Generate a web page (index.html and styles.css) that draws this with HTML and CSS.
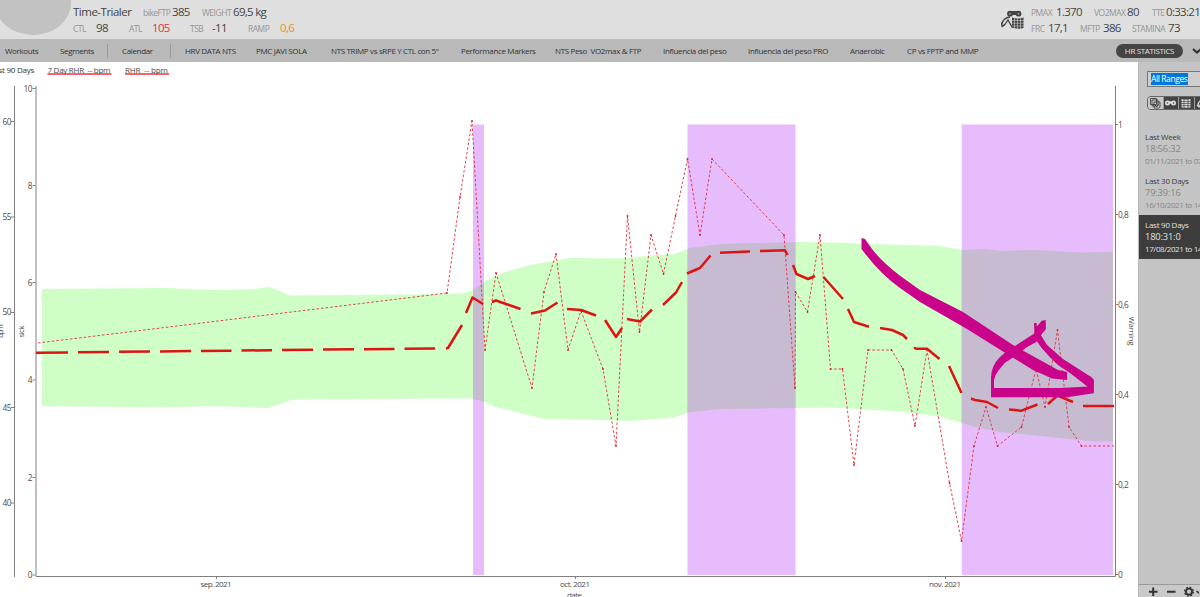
FILE: index.html
```html
<!DOCTYPE html>
<html lang="es">
<head>
<meta charset="utf-8">
<title>Time-Trialer</title>
<link rel="stylesheet" href="styles.css">
</head>
<body>
<div class="app">
  <header class="header">
    <div class="avatar"></div>
    <div class="athlete">
      <div class="row row-name"><b class="name">Time-Trialer</b><i>bikeFTP</i><b>385</b><i>WEIGHT</i><b>69,5 kg</b></div>
      <div class="row row-load"><i>CTL</i><b>98</b><i>ATL</i><b class="red">105</b><i>TSB</i><b>-11</b><i>RAMP</i><b class="orange">0,6</b></div>
    </div>
    <svg class="model-icon" width="24" height="20" viewBox="1001 10 24 20">
      <g fill="#444"><circle cx="1010" cy="13.7" r="2.9"/><circle cx="1018.5" cy="13.7" r="2.9"/><path d="M1010 11h8v4h-8z"/></g>
      <circle cx="1010" cy="13.7" r=".8" fill="#bbb"/><circle cx="1018.5" cy="13.7" r=".8" fill="#bbb"/>
      <path d="M1002 24Q1003 18 1010 17M1001.500 27L1004.500 25 1008 20 1012 27H1014M1001 22.500l1 3 3-1" fill="none" stroke="#444" stroke-width="1.300"/>
      <path d="M1012 17.500Q1018 19.500 1023.500 17.500V28Q1018 29.500 1012 27.500z" fill="#444"/>
      <path d="M1014.500 17v12M1017.500 17v12M1020.500 17v12M1012 20.500h12M1012 23.200h12M1012 26h12" stroke="#d0d0d0" stroke-width=".6"/>
    </svg>
    <div class="power">
      <div class="row row-p1"><i>PMAX</i><b>1.370</b><i>VO2MAX</i><b>80</b><i>TTE</i><b>0:33:21</b></div>
      <div class="row row-p2"><i>FRC</i><b>17,1</b><i>MFTP</i><b>386</b><i>STAMINA</i><b>73</b></div>
    </div>
  </header>
  <nav class="nav">
    <a>Workouts</a><a>Segments</a><span class="sep"></span><a>Calendar</a><span class="sep"></span><a>HRV DATA NTS</a><a>PMC JAVI SOLA</a><a>NTS TRIMP vs sRPE Y CTL con 5"</a><a>Performance Markers</a><a>NTS Peso&nbsp; VO2max &amp; FTP</a><a>Influencia del peso</a><a>Influencia del peso PRO</a><a>Anaerobic</a><a>CP vs FPTP and MMP</a>
    <span class="pill">HR STATISTICS</span>
    <svg class="chev" width="10" height="8" viewBox="0 0 10 8"><path d="M1 2l4 3.500 4-3.500" fill="none" stroke="#333" stroke-width="2.200"/></svg>
  </nav>
  <main class="main">
    <svg class="chart" width="1138" height="535" viewBox="0 62 1138 535">
      <defs>
        <path id="band" d="M42 289L165 288 210 290 250 289.500 270 287 290 295.500 450 294 462 293.500 472 290.500 485 281 505 272 530 265 570 258 625 258.500 655 255 675 254 690 248 720 244 795 242 835 242.500 870 244 940 246 962 250 985 249 1000 251 1035 250 1080 252.500 1113 252V441.500H1095L1060 438 1000 432 975 427 940 416.500 900 411.500 850 408.500 830 407.500 795 408 720 409 688 412.500 675 417.500 630 421 595 420 545 419 495 407 485 402 472 398.500 440 398.500 293 399.500 268 408 210 406 165 407.500 42 406z"/>
        <path id="warn" d="M473 124.500H484V575H473zM687.500 124.500H795.500V575H687.500zM961.700 124.500H1113V575H961.700z"/>
        <clipPath id="inBand"><use href="#band"/></clipPath>
      </defs>
      <g class="legend">
        <text class="period" x="34" y="73" text-anchor="end">Last 90 Days</text>
        <text x="47.500" y="73" textLength="63">7 Day RHR&#160; -- bpm</text>
        <text x="125" y="73" textLength="43">RHR&#160; -- bpm</text>
        <path d="M47.500 74H111.500M125 74H169" stroke="#ee3340" stroke-width="1.500"/>
      </g>
      <use href="#band" fill="#cfffc6"/>
      <use href="#warn" fill="#e6bcfc"/>
      <use href="#warn" fill="#c6bbd0" clip-path="url(#inBand)"/>
      <g class="axis">
        <path d="M14.500 86V577M36 86V576.500H1115.500V86"/>
        <path d="M11 121.500h3M11 217h3M11 312.500h3M11 407.500h3M11 503h3M32.500 88.500h3M32.500 185.500h3M32.500 282.500h3M32.500 380h3M32.500 477.500h3M32.500 575h3M1116 124.500h2M1116 214.500h2M1116 304.500h2M1116 394.500h2M1116 484.500h2M1116 574.500h2M216.500 577v2M575.500 577v2M945.500 577v2"/>
      </g>
      <g class="ticks end">
        <text x="11" y="124.500">60</text><text x="11" y="220">55</text><text x="11" y="315">50</text><text x="11" y="410.500">45</text><text x="11" y="506">40</text>
        <text x="32" y="91.500">10</text><text x="32" y="188.500">8</text><text x="32" y="285.500">6</text><text x="32" y="383">4</text><text x="32" y="480.500">2</text><text x="32" y="578">0</text>
      </g>
      <g class="ticks">
        <text x="1118" y="127.500">1</text><text x="1118" y="217.500">0,8</text><text x="1118" y="307.500">0,6</text><text x="1118" y="397.500">0,4</text><text x="1118" y="487.500">0,2</text><text x="1118" y="577.500">0</text>
      </g>
      <g class="ticks mid">
        <text x="216" y="587" textLength="31">sep. 2021</text><text x="575" y="587" textLength="30">oct. 2021</text><text x="945" y="587" textLength="32">nov. 2021</text><text x="574.500" y="597.500" textLength="15">date</text>
        <text transform="translate(3 331) rotate(-90)" textLength="14">bpm</text>
        <text transform="translate(23.500 331.500) rotate(-90)" textLength="12">sick</text>
        <text transform="translate(1129 331) rotate(90)" textLength="29">Warning</text>
      </g>
      <polyline class="rhr" points="38,343 447,293 460,197 472,121 485,350 496,273 532,388 544,292 556,254 568,350 581,311 603,369 616,446 627.500,216 639.500,332 651,235 663.500,274 675.500,216 687.500,159 700,235 712,159 784,235 795,388 795.500,292 807.500,312 820,235 830.500,369 842.500,369 854,465 868,350 891.500,350 903,369 915,426 927,350 949.500,483 961.500,541 974,446 986,407 997.500,446 1021.500,427 1036,369 1045,407 1057.500,330 1069,427 1081.500,446 1114,446"/>
      <path class="dots" d="M447 293h0M460 197h0M472 121h0M485 350h0M496 273h0M532 388h0M544 292h0M556 254h0M568 350h0M581 311h0M603 369h0M616 446h0M627.500 216h0M639.500 332h0M651 235h0M663.500 274h0M675.500 216h0M687.500 159h0M700 235h0M712 159h0M784 235h0M795 388h0M795.500 292h0M807.500 312h0M820 235h0M830.500 369h0M842.500 369h0M854 465h0M868 350h0M891.500 350h0M903 369h0M915 426h0M949.500 483h0M961.500 541h0M974 446h0M986 407h0M997.500 446h0M1021.500 427h0M1045 407h0M1057.500 330h0M1069 427h0M1081.500 446h0"/>
      <path class="week" d="M36 352.700L68 352.500M78 352.300L109 352M119 351.800L150 351.500M160 351.400L191 351M201 350.900L231.500 350.700M241.500 350.500L272 350.200M282 350L313 349.800M323 349.600L354 349.300M364 349.200L394.500 348.900M404.500 348.700L435 348.400M446 348.500L448 348 462 325M466 313L472.500 297.500 483 304M492 302L496 300.500 520.500 309M531 313.500L545 310.500 557.500 302.500M567 309L581 310 596 315.500M605 320L616 337 622 328M627 319L640 321.500 652 309.500M663 305L676 292.500 682 282M687 273.500L700 268 710.500 255.500M720 252.700L750 251.500M760 251L785 250.300 787.500 255M793 265L796.500 274 808 279 815 276M823.500 277L843 299M848 309L854 322 869 326.700M880 328L892 330 903 335 907 339M914 347.500L916 348.700H927L939.500 359M949 366L961.500 393M971 398.500L975 400 987 402 998 408M1009 409.500L1021.500 410.700 1037.500 404.500M1048 404L1057.500 395.500 1073 402M1083 406H1114"/>
      <g fill="#c9048a">
        <path d="M861.500 238L865 239 872 249Q882 262 900 275.700L920 290 963 312 1013 345 1040 360 1058 370 1067 372V380L1052 378.500 1033 370 1007 354 967 329 920 302 900 288Q880 274 861.500 249z"/>
        <path d="M1045.700 320L1041.700 320.700 1037.300 326 1035 333 1023 340.700 1010 349.300Q1004 353 1000 357 991 366 991 378V396.700L994 389V380Q995 375 998.300 370.700 1002 366 1005 362.700L1016.700 355 1026.700 347.300 1036.700 341.700 1041.700 334.300 1046 329z"/>
        <path d="M991 388H1060L1088 386.500 1093.700 379V393.300L1067 397.300H991z"/>
        <path d="M1034 323H1036.500L1037 327 1042 337 1047 345 1063 359 1088 375Q1093.700 378 1093.700 381V393L1088 387 1070 373 1058 365Q1050 358 1041.700 348L1034.500 338z"/>
      </g>
    </svg>
    <aside class="side">
      <div class="select"><span>All Ranges</span></div>
      <div class="tools">
        <span class="tool on"><svg width="12" height="12" viewBox="0 0 12 12"><path d="M1.500 1.500h6v6h-6zM3 3h6v6H3zM5 5h6v5L9.500 11H5z" fill="#ccc" stroke="#333" stroke-width=".8"/><path d="M6 8l1.500 1.500L10 6.500" fill="none" stroke="#333" stroke-width=".8"/></svg></span>
        <span class="tool"><svg width="13" height="12" viewBox="0 0 13 12"><circle cx="3.500" cy="6" r="2.500" fill="#ddd"/><circle cx="9.500" cy="6" r="2.500" fill="#ddd"/><path d="M3 5.500h7" stroke="#ddd" stroke-width="2.500"/><circle cx="3.500" cy="6" r=".8" fill="#444"/><circle cx="9.500" cy="6" r=".8" fill="#444"/></svg></span>
        <span class="tool"><svg width="12" height="12" viewBox="0 0 12 12"><path d="M1.500 2Q6 3 10.500 2V10.500Q6 11 1.500 10.500z" fill="#ddd"/><path d="M4 1v10M8 1v10M1 4.500h10M1 6.500h10M1 8.700h10" stroke="#444" stroke-width=".7"/></svg></span>
        <span class="tool"><svg width="12" height="12" viewBox="0 0 12 12"><path d="M2 9Q2 4 7 2M1 8l2 2 3-5 2 5" fill="none" stroke="#ddd" stroke-width="1.300"/></svg></span>
      </div>
      <div class="ranges">
        <div class="range"><b>Last Week</b><em>18:56:32</em><small>01/11/2021 to 07/11/2021</small></div>
        <div class="range"><b>Last 30 Days</b><em>79:39:16</em><small>16/10/2021 to 14/11/2021</small></div>
        <div class="range active"><b>Last 90 Days</b><em>180:31:0</em><small>17/08/2021 to 14/11/2021</small></div>
      </div>
      <div class="foot">
        <svg width="60" height="12" viewBox="1139 585 60 12"><path d="M1149 591.700h8.500M1153.200 587.500v8.500M1167 591.700h8.500" stroke="#333" stroke-width="2"/><circle cx="1189" cy="591.700" r="3" fill="none" stroke="#333" stroke-width="1.800"/><circle cx="1189" cy="591.700" r="4.300" fill="none" stroke="#333" stroke-width="1.500" stroke-dasharray="1.800 1.570"/><path d="M1196.500 591l2.500 2 2-2" fill="none" stroke="#333" stroke-width="1.500"/></svg>
      </div>
    </aside>
  </main>
</div>
</body>
</html>
```

FILE: styles.css
```css
* { box-sizing: border-box; }
body { margin: 0; overflow: hidden; font-family: "Open Sans", "Noto Sans", sans-serif; color: #444; background: #fff; }
i, b, em { font-style: normal; font-weight: 400; }
.app { width: 1200px; height: 597px; display: flex; flex-direction: column; overflow: hidden; }

.header { height: 39px; flex: none; display: flex; background: #dfdfdf; overflow: hidden; }
.avatar { width: 76px; height: 64px; margin: -29px 0 0 -5px; flex: none; border-radius: 50%; background: #c2c2c2; }
.athlete { margin-left: 2px; width: 928px; padding-top: 4px; flex: none; }
.model-icon { flex: none; margin-top: 10px; }
.power { margin-left: 6px; padding-top: 4px; flex: none; }
.row { display: grid; height: 16px; line-height: 16px; align-items: baseline; white-space: nowrap; }
.row i { font-size: 8.5px; color: #959595; letter-spacing: -.5px; }
.row b { font-size: 11.5px; letter-spacing: -.7px; }
.row .name { letter-spacing: -.5px; }
.row .red { color: #e4323c; }
.row .orange { color: #ee8d1c; }
.row-name { grid-template-columns: 70px 29px 30px 31px 60px; }
.row-load { grid-template-columns: 23px 33px 23px 38px 22px 36px 32px 30px; }
.row-p1 { grid-template-columns: 25px 38px 33px 25px 14px 40px; }
.row-p2 { grid-template-columns: 17px 32px 23px 29px 36px 30px; }

.nav {
  height: 23px; flex: none; display: grid; align-items: center;
  grid-template-columns: 55px 47px 15px 48px 15px 71px 75px 130px 94px 108px 85px 102px 57px 209px 67px 17px;
  background: #b9b9b9; font-size: 8px; letter-spacing: -.35px; color: #333; white-space: nowrap; padding-left: 5px;
}
.sep { width: 1px; height: 14px; background: #9b9b9b; }
.pill { height: 14px; line-height: 14px; border-radius: 7px; background: #444; color: #e2e2e2; text-align: center; }
.chev { margin-left: 9px; }

.main { display: flex; height: 535px; }
.chart { display: block; flex: none; background: #fff; }
.chart text { font-size: 8px; fill: #4c4c4c; }
.legend .period { fill: #333; letter-spacing: -.25px; }
.chart .ticks text { font-size: 8.3px; letter-spacing: -.5px; }
.end text { text-anchor: end; }
.chart .mid text { text-anchor: middle; letter-spacing: 0; font-size: 8px; }
.axis { stroke: #808080; stroke-width: 1; fill: none; }
.rhr { fill: none; stroke: #e0303c; stroke-width: .9; stroke-dasharray: 2.6 2; }
.dots { stroke: #d81e2c; stroke-width: 1.8; stroke-linecap: round; }
.week { fill: none; stroke: #dd1414; stroke-width: 2.5; stroke-linejoin: round; }

.side { width: 62px; flex: none; display: flex; flex-direction: column; background: #c4c4c4; overflow: hidden; white-space: nowrap; border-left: 1px solid #b8b8b8; }
.select { margin: 9px 0 0 8px; height: 16px; flex: none; border: 1px solid #777; border-right: 0; background: #cecece; font-size: 8.5px; line-height: 13px; padding-left: 3px; letter-spacing: -.4px; }
.select span { background: #0078d7; color: #fff; display: inline-block; height: 12px; line-height: 12px; }
.tools { display: flex; gap: 1px; margin: 9px 0 0 8px; height: 14px; width: 70px; flex: none; border: 1px solid #666; border-radius: 4px; background: #999; overflow: hidden; }
.tool { width: 14.5px; flex: none; background: #444; display: flex; align-items: center; justify-content: center; }
.tool.on { background: #c8c8c8; }
.ranges { margin-top: 17px; flex: 1; }
.range { height: 44px; padding: 4px 0 0 6px; display: flex; flex-direction: column; font-size: 8px; color: #858585; }
.range b { color: #3c3c3c; height: 11px; line-height: 11px; letter-spacing: -.25px; font-size: 8px; }
.range em { font-size: 9.3px; height: 13px; line-height: 13px; letter-spacing: -.15px; }
.range small { font-size: 8px; height: 12px; line-height: 12px; letter-spacing: -.4px; }
.active, .active b { color: #e0e0e0; }
.active { background: #3d3d3d; }
.foot { height: 13px; flex: none; border-top: 1px solid #999; background: #c9c9c9; }
.foot svg { display: block; }
```
